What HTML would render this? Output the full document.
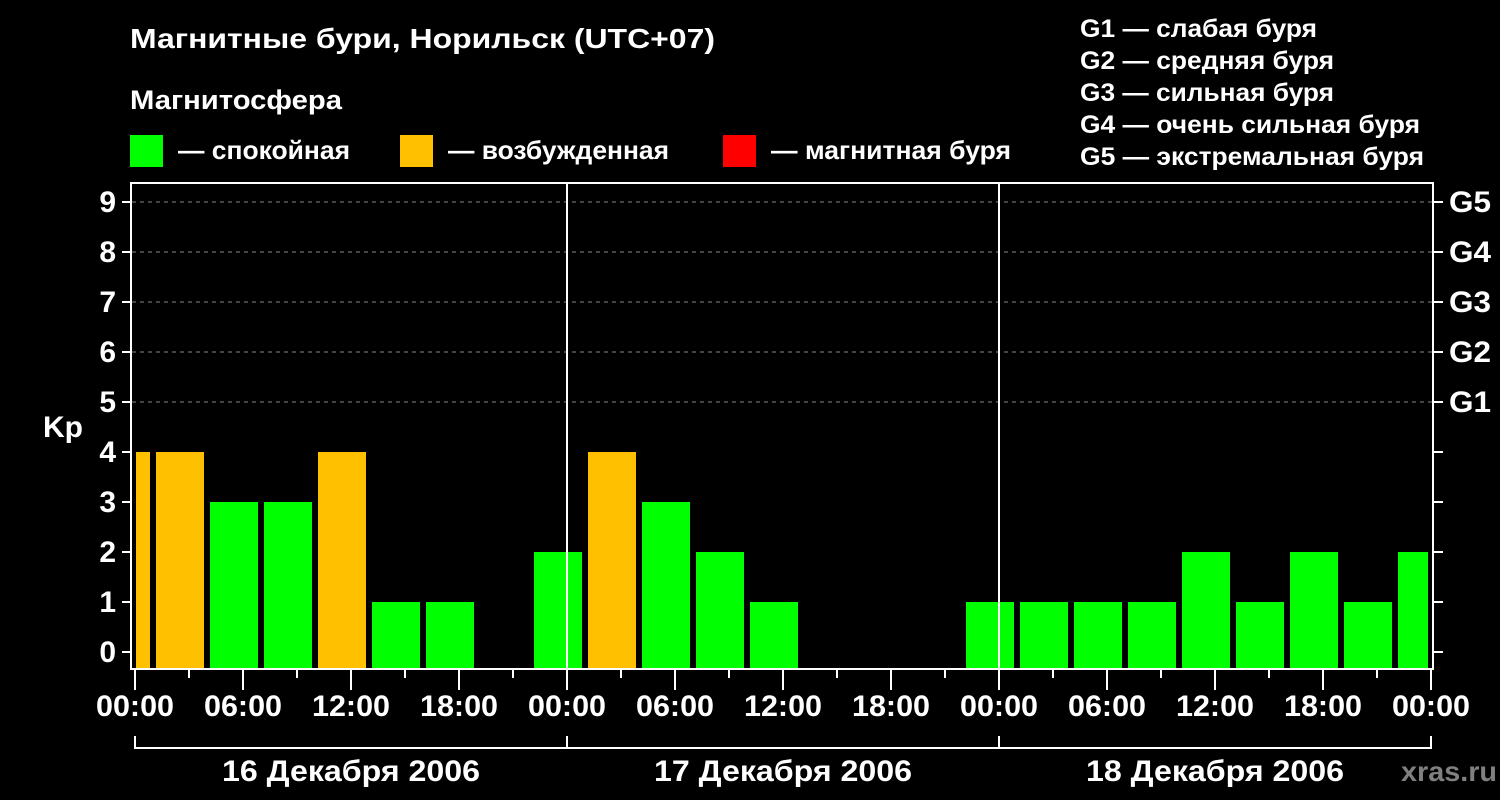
<!DOCTYPE html>
<html><head><meta charset="utf-8"><style>
html,body{margin:0;padding:0;background:#000;}
svg{display:block;}
text{font-family:"Liberation Sans",Arial,sans-serif;font-weight:bold;fill:#fff;}
</style></head><body>
<svg width="1500" height="800" viewBox="0 0 1500 800" xmlns="http://www.w3.org/2000/svg">
<rect width="1500" height="800" fill="#000"/>
<text x="130" y="48" font-size="28" textLength="585" lengthAdjust="spacingAndGlyphs">Магнитные бури, Норильск (UTC+07)</text>
<text x="130" y="109" font-size="27" textLength="212" lengthAdjust="spacingAndGlyphs">Магнитосфера</text>
<rect x="130" y="135" width="33" height="32" fill="#00ff00"/>
<text x="178" y="159" font-size="26" textLength="172" lengthAdjust="spacingAndGlyphs">— спокойная</text>
<rect x="400" y="135" width="33" height="32" fill="#ffc000"/>
<text x="448" y="159" font-size="26" textLength="221" lengthAdjust="spacingAndGlyphs">— возбужденная</text>
<rect x="723" y="135" width="33" height="32" fill="#ff0000"/>
<text x="771" y="159" font-size="26" textLength="240" lengthAdjust="spacingAndGlyphs">— магнитная буря</text>
<g font-size="25">
<text x="1080" y="37" textLength="237" lengthAdjust="spacingAndGlyphs">G1 — слабая буря</text>
<text x="1080" y="69" textLength="254" lengthAdjust="spacingAndGlyphs">G2 — средняя буря</text>
<text x="1080" y="101" textLength="254" lengthAdjust="spacingAndGlyphs">G3 — сильная буря</text>
<text x="1080" y="133" textLength="340" lengthAdjust="spacingAndGlyphs">G4 — очень сильная буря</text>
<text x="1080" y="165" textLength="344" lengthAdjust="spacingAndGlyphs">G5 — экстремальная буря</text>
</g>
<g stroke="#888" stroke-width="1" stroke-dasharray="4,4">
<line x1="132" y1="202" x2="1432" y2="202"/>
<line x1="132" y1="252" x2="1432" y2="252"/>
<line x1="132" y1="302" x2="1432" y2="302"/>
<line x1="132" y1="352" x2="1432" y2="352"/>
<line x1="132" y1="402" x2="1432" y2="402"/>
</g>
<g>
<rect x="136" y="452" width="14" height="216" fill="#ffc000"/>
<rect x="156" y="452" width="48" height="216" fill="#ffc000"/>
<rect x="210" y="502" width="48" height="166" fill="#00ff00"/>
<rect x="264" y="502" width="48" height="166" fill="#00ff00"/>
<rect x="318" y="452" width="48" height="216" fill="#ffc000"/>
<rect x="372" y="602" width="48" height="66" fill="#00ff00"/>
<rect x="426" y="602" width="48" height="66" fill="#00ff00"/>
<rect x="534" y="552" width="48" height="116" fill="#00ff00"/>
<rect x="588" y="452" width="48" height="216" fill="#ffc000"/>
<rect x="642" y="502" width="48" height="166" fill="#00ff00"/>
<rect x="696" y="552" width="48" height="116" fill="#00ff00"/>
<rect x="750" y="602" width="48" height="66" fill="#00ff00"/>
<rect x="966" y="602" width="48" height="66" fill="#00ff00"/>
<rect x="1020" y="602" width="48" height="66" fill="#00ff00"/>
<rect x="1074" y="602" width="48" height="66" fill="#00ff00"/>
<rect x="1128" y="602" width="48" height="66" fill="#00ff00"/>
<rect x="1182" y="552" width="48" height="116" fill="#00ff00"/>
<rect x="1236" y="602" width="48" height="66" fill="#00ff00"/>
<rect x="1290" y="552" width="48" height="116" fill="#00ff00"/>
<rect x="1344" y="602" width="48" height="66" fill="#00ff00"/>
<rect x="1398" y="552" width="30" height="116" fill="#00ff00"/>
</g>
<g stroke="#fff" stroke-width="2" fill="none">
<rect x="131" y="183" width="1302" height="486"/>
<line x1="567" y1="183" x2="567" y2="668"/>
<line x1="999" y1="183" x2="999" y2="668"/>
<path d="M122 652H131M122 602H131M122 552H131M122 502H131M122 452H131M122 402H131M122 352H131M122 302H131M122 252H131M122 202H131"/>
<path d="M1433 652H1443M1433 602H1443M1433 552H1443M1433 502H1443M1433 452H1443M1433 402H1443M1433 352H1443M1433 302H1443M1433 252H1443M1433 202H1443"/>
<path d="M135 669V690M243 669V690M351 669V690M459 669V690M567 669V690M675 669V690M783 669V690M891 669V690M999 669V690M1107 669V690M1215 669V690M1323 669V690M1431 669V690"/>
<path d="M189 669V678M297 669V678M405 669V678M513 669V678M621 669V678M729 669V678M837 669V678M945 669V678M1053 669V678M1161 669V678M1269 669V678M1377 669V678"/>
<path d="M135 736V748H1431V736M567 736V748M999 736V748"/>
</g>
<g font-size="30" text-anchor="end">
<text x="116" y="662">0</text><text x="116" y="612">1</text><text x="116" y="562">2</text>
<text x="116" y="512">3</text><text x="116" y="462">4</text><text x="116" y="412">5</text>
<text x="116" y="362">6</text><text x="116" y="312">7</text><text x="116" y="262">8</text>
<text x="116" y="212">9</text>
</g>
<text x="43" y="437" font-size="30">Kp</text>
<g font-size="30">
<text x="1449" y="212" textLength="42" lengthAdjust="spacingAndGlyphs">G5</text><text x="1449" y="262" textLength="42" lengthAdjust="spacingAndGlyphs">G4</text><text x="1449" y="312" textLength="42" lengthAdjust="spacingAndGlyphs">G3</text>
<text x="1449" y="362" textLength="42" lengthAdjust="spacingAndGlyphs">G2</text><text x="1449" y="412" textLength="42" lengthAdjust="spacingAndGlyphs">G1</text>
</g>
<g font-size="30" text-anchor="middle">
<g textLength="78">
<text x="135" y="716" textLength="78" lengthAdjust="spacingAndGlyphs">00:00</text><text x="243" y="716" textLength="78" lengthAdjust="spacingAndGlyphs">06:00</text><text x="351" y="716" textLength="78" lengthAdjust="spacingAndGlyphs">12:00</text><text x="459" y="716" textLength="78" lengthAdjust="spacingAndGlyphs">18:00</text>
<text x="567" y="716" textLength="78" lengthAdjust="spacingAndGlyphs">00:00</text><text x="675" y="716" textLength="78" lengthAdjust="spacingAndGlyphs">06:00</text><text x="783" y="716" textLength="78" lengthAdjust="spacingAndGlyphs">12:00</text><text x="891" y="716" textLength="78" lengthAdjust="spacingAndGlyphs">18:00</text>
<text x="999" y="716" textLength="78" lengthAdjust="spacingAndGlyphs">00:00</text><text x="1107" y="716" textLength="78" lengthAdjust="spacingAndGlyphs">06:00</text><text x="1215" y="716" textLength="78" lengthAdjust="spacingAndGlyphs">12:00</text><text x="1323" y="716" textLength="78" lengthAdjust="spacingAndGlyphs">18:00</text>
<text x="1431" y="716" textLength="78" lengthAdjust="spacingAndGlyphs">00:00</text>
</g>
<text x="351" y="781" textLength="258" lengthAdjust="spacingAndGlyphs">16 Декабря 2006</text>
<text x="783" y="781" textLength="258" lengthAdjust="spacingAndGlyphs">17 Декабря 2006</text>
<text x="1215" y="781" textLength="258" lengthAdjust="spacingAndGlyphs">18 Декабря 2006</text>
</g>
<text x="1401" y="781" font-size="28" textLength="96" lengthAdjust="spacingAndGlyphs" style="fill:#808080">xras.ru</text>
</svg>
</body></html>
